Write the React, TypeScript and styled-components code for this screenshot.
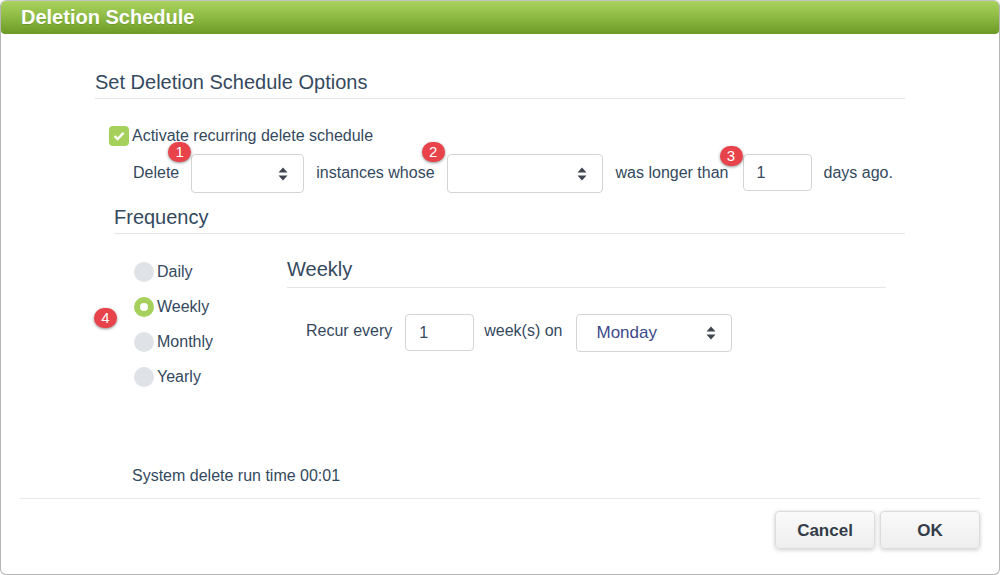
import React from 'react';
import styled, { createGlobalStyle } from 'styled-components';

const Global = createGlobalStyle`
  html, body {
    margin: 0;
    padding: 0;
    background: #fff;
  }
  * {
    box-sizing: border-box;
  }
`;

const Dialog = styled.div`
  width: 1000px;
  height: 575px;
  display: flex;
  flex-direction: column;
  background: #fff;
  border: 1px solid #b5b5b5;
  border-top: 1px solid #c4c4c4;
  border-radius: 6px;
  font-family: 'Liberation Sans', Arial, sans-serif;
  font-size: 16px;
  color: #34495e;
  overflow: hidden;
`;

const TitleBar = styled.header`
  height: 33px;
  flex: none;
  display: flex;
  align-items: center;
  padding: 0 0 0 20px;
  background: linear-gradient(to bottom, #a9d25e 0%, #8fbc45 45%, #6b9a26 100%);
  border-radius: 4px;
  color: #fff;
  font-size: 20px;
  font-weight: bold;
  text-shadow: 0 1px 0 rgba(60, 90, 20, 0.25);
`;

const Body = styled.main`
  flex: none;
  padding: 0 94px;
  display: flex;
  flex-direction: column;
`;

const Heading = styled.h3<{ $top: number; $gap?: number }>`
  margin: ${(p) => p.$top}px 0 0;
  padding-bottom: ${(p) => p.$gap ?? 4}px;
  font-size: 20px;
  line-height: 24px;
  font-weight: normal;
  color: #34495e;
  border-bottom: 1px solid #e3e5e7;
`;

const CheckRow = styled.label`
  margin: 27px 0 0 14px;
  height: 20px;
  display: flex;
  align-items: center;
  gap: 3px;
`;

const CheckBox = styled.span`
  width: 20px;
  height: 20px;
  border-radius: 4px;
  background: #a5d05c;
  display: flex;
  align-items: center;
  justify-content: center;
`;

const DeleteRow = styled.div`
  margin: 8px 0 0 38px;
  display: flex;
  align-items: flex-start;
  height: 39px;
`;

const RowText = styled.span<{ $left: number; $right: number; $line?: number }>`
  margin: 0 ${(p) => p.$right}px 0 ${(p) => p.$left}px;
  line-height: ${(p) => p.$line ?? 37}px;
  white-space: nowrap;
`;

const Anchor = styled.div`
  position: relative;
`;

const Badge = styled.span<{ $x: number; $y: number }>`
  position: absolute;
  left: ${(p) => p.$x}px;
  top: ${(p) => p.$y}px;
  width: 23px;
  height: 20px;
  border-radius: 10px;
  background: #e8434b;
  color: #fff;
  font-size: 15px;
  line-height: 20px;
  text-align: center;
  box-shadow: 0 1px 3px rgba(0, 0, 0, 0.45);
`;

const SelectBox = styled.div<{ $width: number; $height: number }>`
  width: ${(p) => p.$width}px;
  height: ${(p) => p.$height}px;
  display: flex;
  align-items: center;
  justify-content: space-between;
  padding: 0 15px 0 20px;
  background: #fff;
  border: 1px solid #d4d4d4;
  border-radius: 4px;
  font-size: 17px;
  color: #3c4a8a;
`;

const NumberBox = styled.input<{ $width: number }>`
  width: ${(p) => p.$width}px;
  height: 37px;
  padding: 0 13px;
  border: 1px solid #d4d4d4;
  border-radius: 4px;
  font: inherit;
  color: #34495e;
  outline: none;
`;

const FrequencySection = styled.section`
  margin-left: 19px;
  display: flex;
  flex-direction: column;
`;

const FrequencyBody = styled.div`
  position: relative;
  display: flex;
`;

const RadioList = styled.div`
  width: 173px;
  padding: 28px 0 0 20px;
  display: flex;
  flex-direction: column;
  gap: 15px;
`;

const RadioRow = styled.label`
  height: 20px;
  display: flex;
  align-items: center;
  gap: 3px;
`;

const RadioDot = styled.span<{ $on?: boolean }>`
  width: 20px;
  height: 20px;
  border-radius: 50%;
  background: ${(p) => (p.$on ? '#a5d05c' : '#dfe2e7')};
  display: flex;
  align-items: center;
  justify-content: center;
  &::after {
    content: '';
    width: 8px;
    height: 8px;
    border-radius: 50%;
    background: #fff;
    display: ${(p) => (p.$on ? 'block' : 'none')};
  }
`;

const WeeklyPanel = styled.div`
  width: 599px;
  padding-top: 23px;
`;

const RecurRow = styled.div`
  margin: 26px 0 0 19px;
  display: flex;
  align-items: flex-start;
`;

const RunTime = styled.p`
  margin: 79px 0 0 37px;
  line-height: 20px;
`;

const Footer = styled.footer`
  margin: 12px 19px 0;
  padding-top: 12px;
  border-top: 1px solid #e8e8e8;
  display: flex;
  justify-content: flex-end;
  gap: 5px;
`;

const ActionButton = styled.button`
  width: 100px;
  height: 38px;
  padding: 2px 0 0;
  border: 1px solid #dcdcdc;
  border-radius: 4px;
  background: linear-gradient(to bottom, #fafafa, #eeeeee);
  box-shadow: 0 1px 4px rgba(0, 0, 0, 0.2);
  font-family: inherit;
  font-size: 17px;
  font-weight: bold;
  color: #333c48;
`;

const Caret = () => (
  <svg width="10" height="14" viewBox="0 0 10 14">
    <path d="M5 0.5 L9.5 5.5 H0.5 Z M5 13.5 L0.5 8.5 H9.5 Z" fill="#3f4650" />
  </svg>
);

const Check = () => (
  <svg width="12" height="10" viewBox="0 0 12 10">
    <path d="M1.5 5 L4.6 8 L10.5 1.8" fill="none" stroke="#fff" strokeWidth="2.4" />
  </svg>
);

const frequencies = ['Daily', 'Weekly', 'Monthly', 'Yearly'];

export default function App() {
  return (
    <Dialog>
      <Global />
      <TitleBar>Deletion Schedule</TitleBar>
      <Body>
        <Heading $top={36}>Set Deletion Schedule Options</Heading>
        <CheckRow>
          <CheckBox>
            <Check />
          </CheckBox>
          Activate recurring delete schedule
        </CheckRow>
        <DeleteRow>
          <RowText $left={0} $right={12}>Delete</RowText>
          <Anchor>
            <Badge $x={-23} $y={-12}>1</Badge>
            <SelectBox $width={113} $height={39}>
              <span />
              <Caret />
            </SelectBox>
          </Anchor>
          <RowText $left={12} $right={12}>instances whose</RowText>
          <Anchor>
            <Badge $x={-25} $y={-12}>2</Badge>
            <SelectBox $width={156} $height={39}>
              <span />
              <Caret />
            </SelectBox>
          </Anchor>
          <RowText $left={13} $right={14}>was longer than</RowText>
          <Anchor>
            <Badge $x={-23} $y={-8}>3</Badge>
            <NumberBox $width={69} defaultValue="1" />
          </Anchor>
          <RowText $left={12} $right={0}>days ago.</RowText>
        </DeleteRow>
        <FrequencySection>
          <Heading $top={12}>Frequency</Heading>
          <FrequencyBody>
            <Badge $x={-20} $y={74}>4</Badge>
            <RadioList>
              {frequencies.map((f) => (
                <RadioRow key={f}>
                  <RadioDot $on={f === 'Weekly'} />
                  {f}
                </RadioRow>
              ))}
            </RadioList>
            <WeeklyPanel>
              <Heading $top={0} $gap={6}>Weekly</Heading>
              <RecurRow>
                <RowText $left={0} $right={13} $line={33}>Recur every</RowText>
                <NumberBox $width={69} defaultValue="1" />
                <RowText $left={10} $right={13} $line={33}>week(s) on</RowText>
                <SelectBox $width={156} $height={38}>
                  Monday
                  <Caret />
                </SelectBox>
              </RecurRow>
            </WeeklyPanel>
          </FrequencyBody>
        </FrequencySection>
        <RunTime>System delete run time 00:01</RunTime>
      </Body>
      <Footer>
        <ActionButton>Cancel</ActionButton>
        <ActionButton>OK</ActionButton>
      </Footer>
    </Dialog>
  );
}
